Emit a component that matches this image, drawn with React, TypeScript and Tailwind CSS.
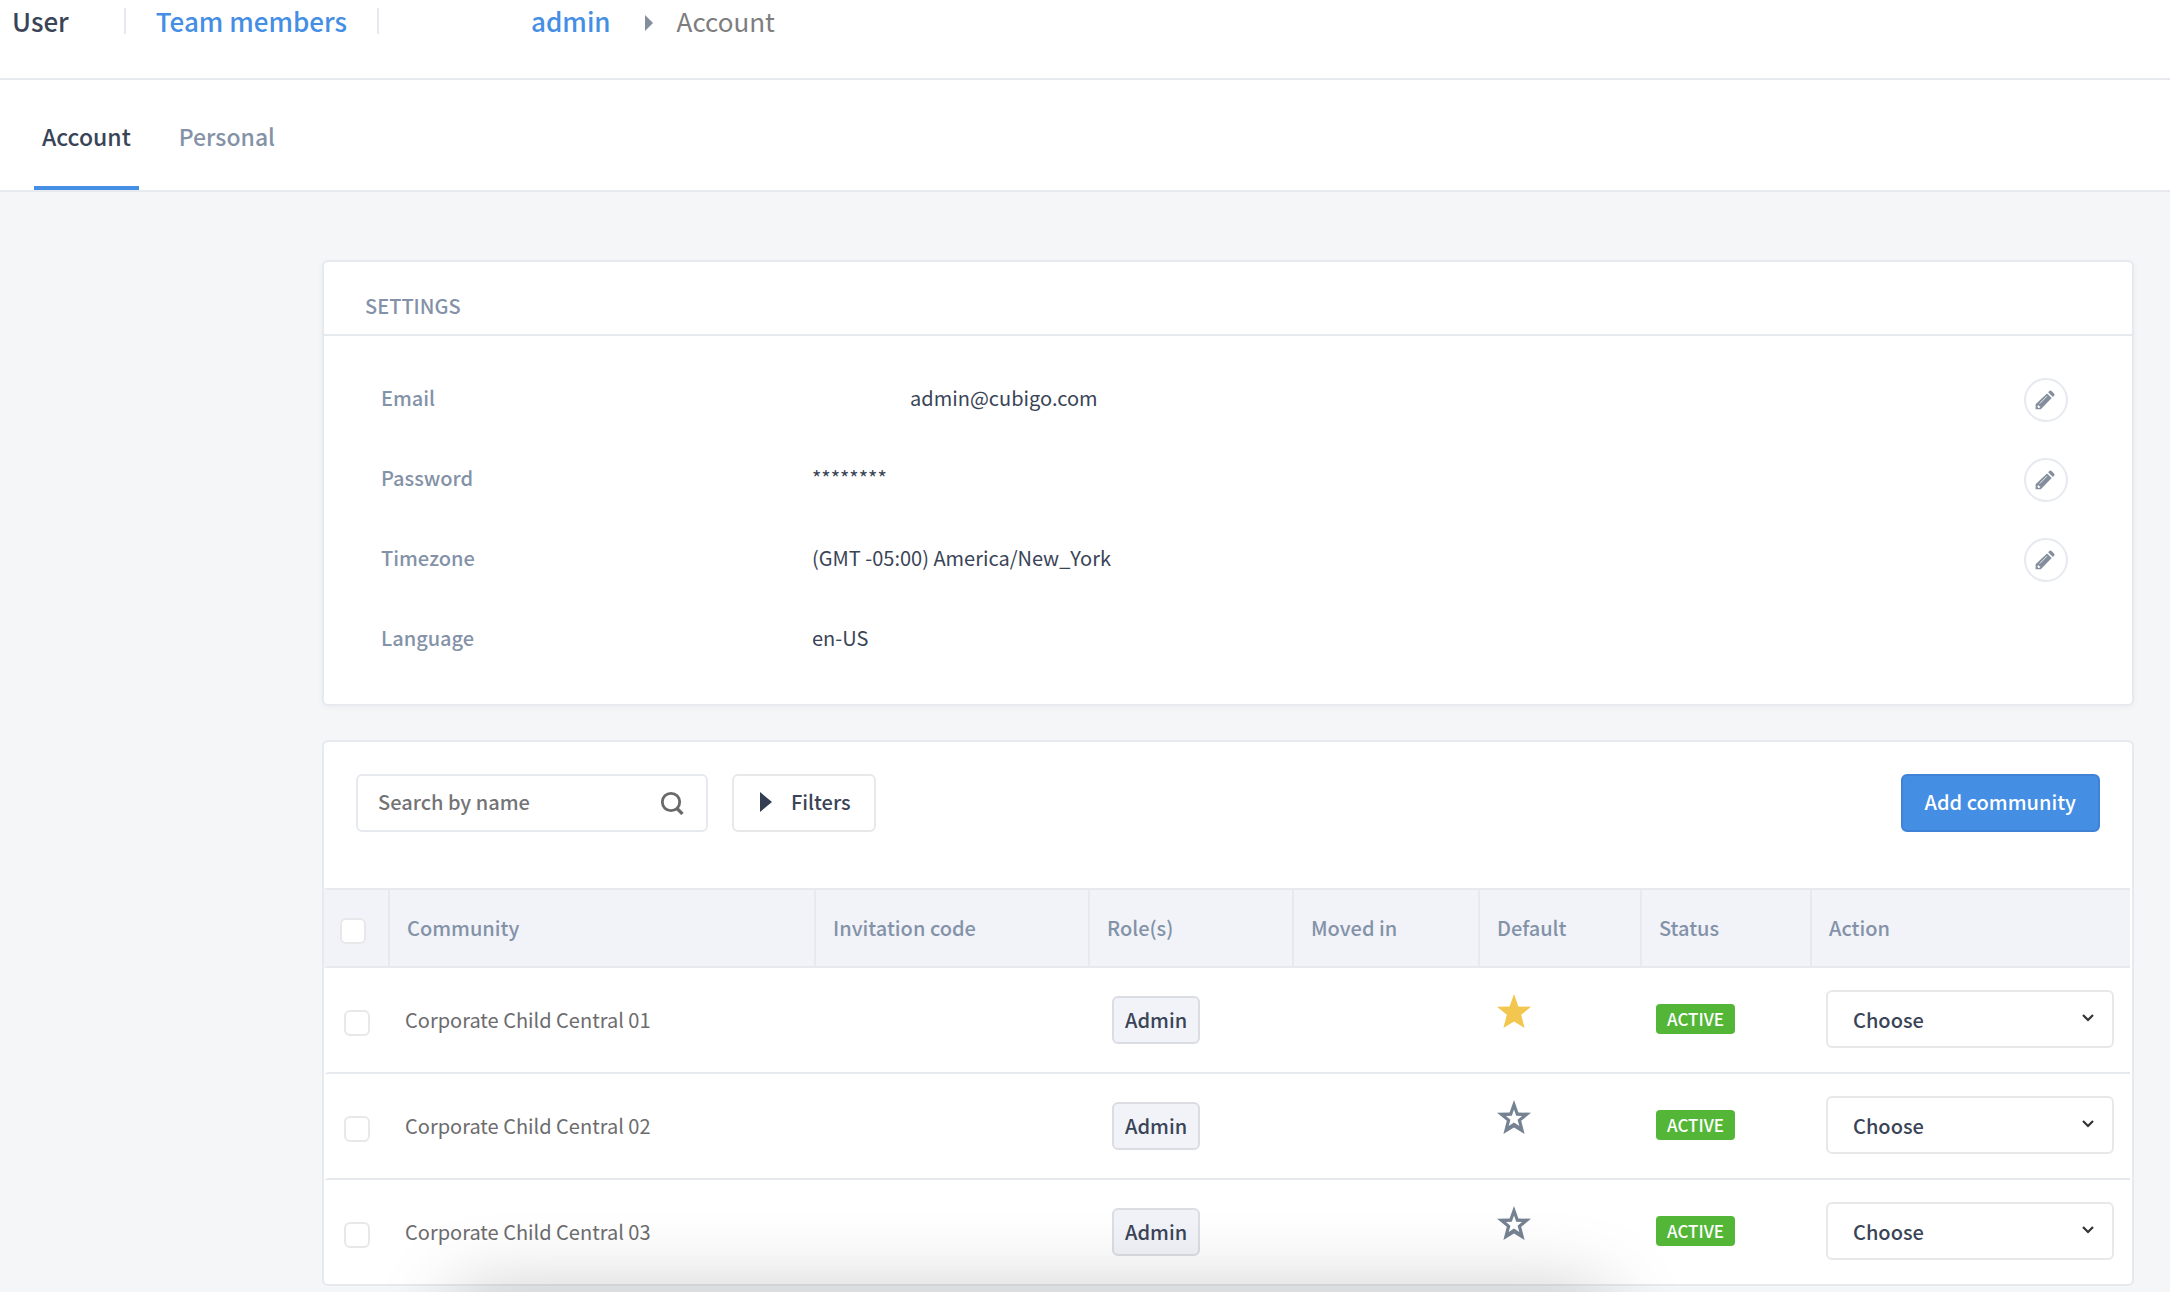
import { useState } from 'react';

const settings = [
  { label: 'Email', value: 'admin@cubigo.com', indent: true, editable: true },
  { label: 'Password', value: '********', editable: true },
  { label: 'Timezone', value: '(GMT -05:00) America/New_York', editable: true },
  { label: 'Language', value: 'en-US', editable: false },
];

const headers = ['Community', 'Invitation code', 'Role(s)', 'Moved in', 'Default', 'Status', 'Action'];

const initialRows = [
  { name: 'Corporate Child Central 01', role: 'Admin', isDefault: true },
  { name: 'Corporate Child Central 02', role: 'Admin', isDefault: false },
  { name: 'Corporate Child Central 03', role: 'Admin', isDefault: false },
];

function PencilIcon() {
  return (
    <svg viewBox="0 0 20 20" className="size-5 mr-[3px]" fill="#848d9c">
      <path d="M13.200 2.200 14.300 1.100c.7-.7 1.500-.7 2.200 0l2.500 2.500c.7.7.7 1.500 0 2.200L17.900 6.900z" />
      <path d="M12 3.400 16.700 8.100 5.800 19.200H.600V14.300z" />
      <path d="M4.600 13.600 12 6.200" stroke="#fff" strokeWidth="0.800" />
      <path d="M2.300 16.300l1.300-1.300.6 1.200 1.400.6-1.300 1.300-1.100-.2z" fill="#fff" />
    </svg>
  );
}

function StarIcon({ filled }: { filled: boolean }) {
  return filled ? (
    <svg viewBox="0 0 34 34" className="w-[34px] h-[34px]" fill="#f3c74f">
      <path d="M17 0 21.400 12.400 34 12.800 24.200 20.800 27.600 34 17 27.400 6.400 34 9.800 20.800 0 12.800l12.600-.4z" />
    </svg>
  ) : (
    <svg viewBox="0 0 34 34" className="w-[34px] h-[34px]" fill="#758292">
      <path
        fillRule="evenodd"
        d="M17 0 21.400 12.400 34 12.800 24.200 20.800 27.600 34 17 27.400 6.400 34 9.800 20.800 0 12.800l12.600-.4zM17 9.500l-2.200 6.200-5.800.2 4.400 3.900-1.700 6.200 5.300-3.500 5.300 3.500-1.700-6.200 4.400-3.900-5.800-.2z"
      />
    </svg>
  );
}

function Checkbox({ label }: { label: string }) {
  return (
    <input
      type="checkbox"
      aria-label={label}
      className="block size-[26px] mt-1.5 appearance-none rounded-md border-2 border-[#e8e8ea] bg-white checked:bg-[#448ee4]"
    />
  );
}

export default function App() {
  const [rows, setRows] = useState(initialRows);

  const setDefault = (name: string) => {
    setRows(rows.map((row) => ({ ...row, isDefault: row.name === name })));
  };

  return (
    <div className="min-h-screen bg-[#f4f6f8] pb-1.5 font-['Noto_Sans_CJK_SC','Noto_Sans',sans-serif] text-[20px] leading-7 text-[#3a4457]">
      <header className="h-20 bg-white border-b-2 border-[#e6e9ee]">
        <nav className="flex items-center h-[42px] pl-3 text-[26px] font-medium">
          <span>User</span>
          <span className="w-0.5 h-[26px] ml-[55px] mr-[30px] bg-[#e6e9ee]" />
          <a href="#team" className="text-[#448ee4]">Team members</a>
          <span className="w-0.5 h-[26px] ml-[30px] mr-[152px] bg-[#e6e9ee]" />
          <a href="#admin" className="text-[#448ee4]">admin</a>
          <svg viewBox="0 0 8 16" className="w-2 h-4 ml-[34px] mr-6 mt-1" fill="#848d9c">
            <path d="M0 0l8 8-8 8z" />
          </svg>
          <span className="font-normal text-[#7d7d80]">Account</span>
        </nav>
      </header>

      <nav className="flex h-28 pl-[34px] gap-8 bg-white border-b-2 border-[#e6e9ee] text-[23px] font-medium">
        <a href="#account" className="flex items-center px-2 pt-1.5 border-b-4 border-[#448ee4]">Account</a>
        <a href="#personal" className="flex items-center px-2 pt-1.5 border-b-4 border-transparent text-[#8492a8]">Personal</a>
      </nav>

      <main className="flex flex-col gap-[34px] pt-[68px] pl-[322px] pr-9">
        <section className="bg-white border-2 border-[#e6e9ee] rounded-md shadow-[0_2px_6px_rgba(0,0,0,0.04)]">
          <h2 className="px-[41px] pt-[30px] pb-[14px] border-b-2 border-[#e6e9ee] font-medium text-[#8492a8]">SETTINGS</h2>
          <dl className="pt-6 pb-6 pl-[57px] pr-16">
            {settings.map((item) => (
              <div key={item.label} className="flex items-center h-20">
                <dt className="w-[431px] pb-1 font-medium text-[#8492a8]">{item.label}</dt>
                <dd className={item.indent ? 'flex-1 pb-1 pl-[98px]' : 'flex-1 pb-1'}>{item.value}</dd>
                {item.editable && (
                  <dd>
                    <button
                      aria-label={`Edit ${item.label}`}
                      className="flex items-center justify-center size-11 rounded-full border-2 border-[#e6e9ee]"
                    >
                      <PencilIcon />
                    </button>
                  </dd>
                )}
              </div>
            ))}
          </dl>
        </section>

        <section className="bg-white border-2 border-[#e6e9ee] rounded-md">
          <div className="flex items-center pt-8 pb-14 px-8">
            <label className="flex items-center w-[352px] h-[58px] pl-5 pr-[22px] border-2 border-[#e6e9ee] rounded-md">
              <input
                type="text"
                aria-label="Search by name"
                placeholder="Search by name"
                className="flex-1 min-w-0 pb-0.5 font-medium outline-none placeholder:text-[#747476]"
              />
              <svg viewBox="0 0 24 24" className="size-6" fill="none" stroke="#69696b" strokeWidth="2.800">
                <circle cx="11" cy="11" r="8.700" />
                <path d="M17 17.500l5.500 5.500" strokeWidth="3.200" />
              </svg>
            </label>
            <button className="flex items-center h-[58px] ml-6 pl-[26px] pr-[23px] pb-0.5 gap-[19px] border-2 border-[#e8e8ea] rounded-md font-medium">
              <svg viewBox="0 0 12 20" className="w-3 h-5" fill="#333e52">
                <path d="M0 0l12 10L0 20z" />
              </svg>
              Filters
            </button>
            <button className="h-[58px] ml-auto px-[22px] pb-0.5 bg-[#448ee4] border-2 border-[#3f82d6] rounded-md font-medium text-white">
              Add community
            </button>
          </div>

          <div className="pr-0.5">
            <table className="w-full table-fixed border-separate border-spacing-0 text-left">
              <colgroup>
                <col className="w-[66px]" />
                <col />
                <col className="w-[274px]" />
                <col className="w-[204px]" />
                <col className="w-[186px]" />
                <col className="w-[162px]" />
                <col className="w-[170px]" />
                <col className="w-[318px]" />
              </colgroup>
              <thead>
                <tr className="h-20 bg-[#f1f3f8] text-[#8492a8]">
                  <th className="pl-3 border-y-2 border-r-2 border-l-4 border-[#e6e9ee] border-l-transparent">
                    <Checkbox label="Select all" />
                  </th>
                  {headers.map((header) => (
                    <th key={header} className="pl-[17px] border-y-2 border-r-2 last:border-r-0 border-[#e6e9ee] font-medium">
                      {header}
                    </th>
                  ))}
                </tr>
              </thead>
              <tbody className="[&>tr:last-child>td]:border-b-0">
                {rows.map((row) => (
                  <tr key={row.name} className="h-[106px] last:h-[104px] [&>td]:border-b-2 [&>td]:border-[#e6e9ee]">
                    <td className="pl-4 border-l-4 border-l-transparent!">
                      <Checkbox label={row.name} />
                    </td>
                    <td className="pl-[15px] text-[#6c6c6e]">{row.name}</td>
                    <td />
                    <td className="pl-[22px]">
                      <span className="inline-flex items-center h-12 px-[11px] bg-[#f1f3f8] border-2 border-[#dcdde2] rounded-md font-medium">
                        {row.role}
                      </span>
                    </td>
                    <td />
                    <td className="pl-[17px] pb-[18px]">
                      <button aria-label={`Make ${row.name} default`} className="block" onClick={() => setDefault(row.name)}>
                        <StarIcon filled={row.isDefault} />
                      </button>
                    </td>
                    <td className="pl-[14px] pb-0.5">
                      <span className="flex items-center w-fit h-[30px] px-[11px] bg-[#53b636] rounded text-[17px] font-medium text-white">
                        ACTIVE
                      </span>
                    </td>
                    <td className="pl-[14px] pr-4 pb-0.5">
                      <div className="relative">
                        <select
                          aria-label={`Action for ${row.name}`}
                          className="block w-full h-[58px] pl-[25px] pt-0.5 appearance-none bg-white border-2 border-[#e8e8ea] rounded-md font-medium"
                        >
                          <option>Choose</option>
                        </select>
                        <svg viewBox="0 0 12 8" className="absolute right-5 top-6 w-3 h-2 pointer-events-none" fill="none" stroke="#333" strokeWidth="2.200">
                          <path d="M1 1l5 5 5-5" />
                        </svg>
                      </div>
                    </td>
                  </tr>
                ))}
              </tbody>
            </table>
          </div>
        </section>
      </main>

      <div className="fixed top-full left-[21%] right-[26%] h-20 shadow-[0_0_80px_rgba(0,0,0,0.22)] pointer-events-none" />
    </div>
  );
}
